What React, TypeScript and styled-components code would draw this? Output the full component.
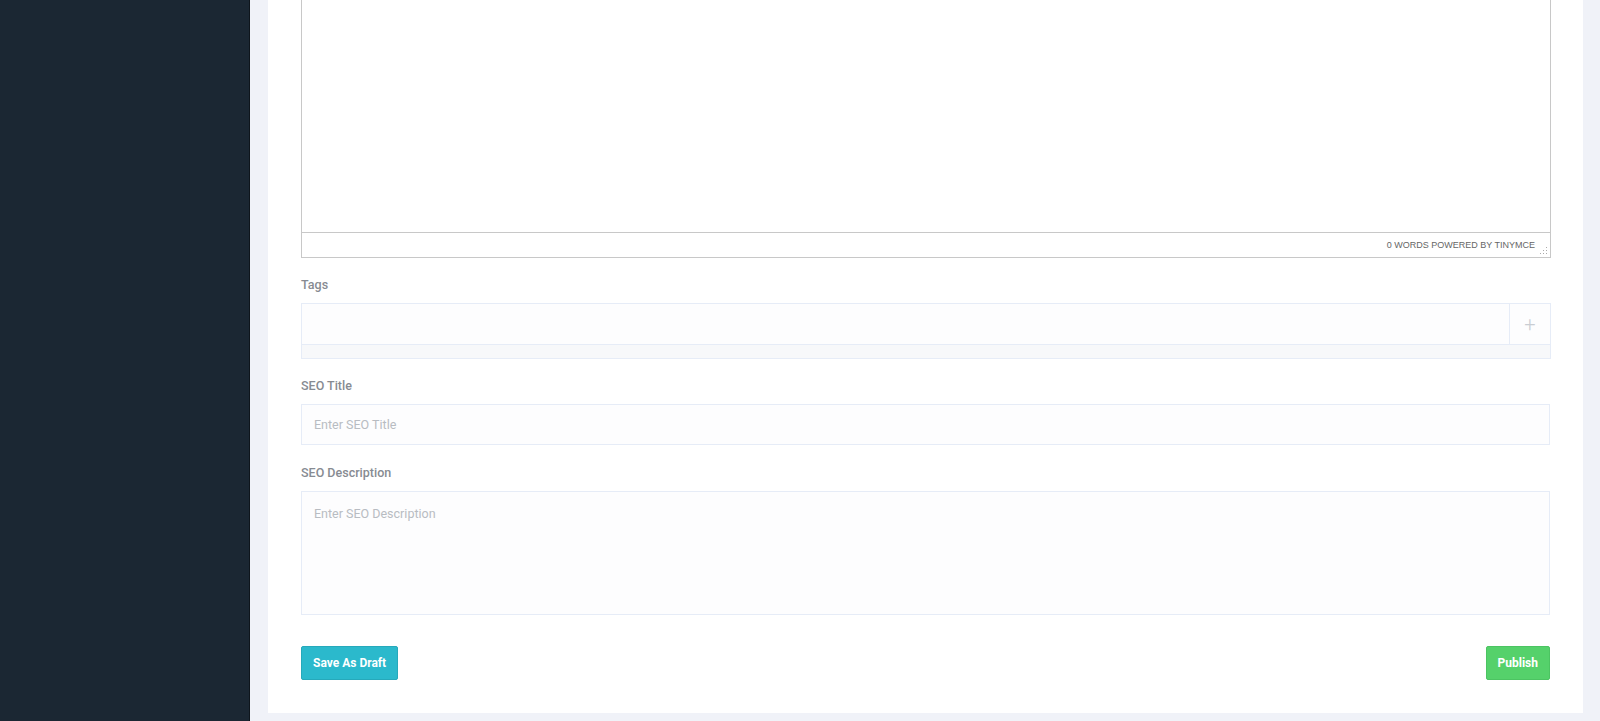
import React from "react"
import styled, { createGlobalStyle } from "styled-components"

const GlobalStyle = createGlobalStyle`
  html, body {
    margin: 0;
    padding: 0;
    height: 721px;
    overflow: hidden;
    font-family: "Roboto", "Noto Sans", sans-serif;
  }
`

const Page = styled.div`
  display: flex;
  height: 721px;
`

const Sidebar = styled.aside`
  width: 249px;
  flex-shrink: 0;
  background: #1b2733;
  border-right: 1px solid #0e151c;
`

const Main = styled.main`
  flex: 1;
  background: #f0f2f8;
  padding: 0 17px 8px 18px;
  display: flex;
  flex-direction: column;
  justify-content: flex-end;
`

const Card = styled.div`
  background: #ffffff;
  padding: 0 32px 33px 33px;
`

const Editor = styled.div`
  border: 1px solid #c8c8c8;
  border-top: none;
  display: flex;
  flex-direction: column;
`

const EditorBody = styled.div`
  height: 240px;
`

const StatusBar = styled.div`
  height: 24px;
  border-top: 1px solid #c8c8c8;
  display: flex;
  align-items: center;
  justify-content: flex-end;
  padding-right: 15px;
  position: relative;
  font-family: "Liberation Sans", Arial, sans-serif;
  font-size: 9px;
  color: #666;
  text-transform: uppercase;
`

const Grip = styled.svg`
  position: absolute;
  right: 2px;
  bottom: 2px;
`

const Group = styled.div<{ $top: number }>`
  margin-top: ${p => p.$top}px;
`

const Label = styled.div`
  font-size: 12.5px;
  font-weight: 500;
  line-height: 16px;
  color: #878b92;
  margin-bottom: 10px;
`

const TagsBox = styled.div`
  width: 1248px;
  border: 1px solid #e6ecf7;
  background: #f7f8fa;
`

const TagsRow = styled.div`
  display: flex;
  height: 40px;
  background: #fdfdfe;
  border-bottom: 1px solid #e6ecf7;
`

const TagsInput = styled.div`
  flex: 1;
`

const AddButton = styled.div`
  width: 40px;
  border-left: 1px solid #e6ecf7;
  display: flex;
  align-items: center;
  justify-content: center;
  color: #c9cdd3;
  font-size: 20px;
  font-weight: 300;
`

const TagsStrip = styled.div`
  height: 13px;
`

const Field = styled.div<{ $height: number; $multi?: boolean }>`
  height: ${p => p.$height}px;
  box-sizing: border-box;
  border: 1px solid #e6ecf7;
  background: #fdfdfe;
  padding: ${p => (p.$multi ? "14px 12px" : "0 12px")};
  display: flex;
  align-items: ${p => (p.$multi ? "flex-start" : "center")};
  font-size: 12.5px;
  color: #b8bcc2;
  width: 1249px;
`

const Actions = styled.div`
  display: flex;
  justify-content: space-between;
  margin-top: 31px;
  width: 1249px;
`

const Button = styled.button<{ $color: string; $border: string }>`
  height: 34px;
  padding: 0 11px;
  border: 1px solid ${p => p.$border};
  border-radius: 2px;
  background: ${p => p.$color};
  color: #fff;
  font-family: "Roboto", "Noto Sans", sans-serif;
  font-size: 12px;
  font-weight: 700;
  cursor: pointer;
`

export default function App() {
  return (
    <>
      <GlobalStyle />
      <Page>
        <Sidebar />
        <Main>
          <Card>
            <Editor>
              <EditorBody />
              <StatusBar>
                0 words powered by tinymce
                <Grip width="8" height="8" viewBox="0 0 8 8">
                  <g fill="#aaa">
                    <rect x="6" y="0" width="1" height="1" />
                    <rect x="6" y="3" width="1" height="1" />
                    <rect x="3" y="3" width="1" height="1" />
                    <rect x="6" y="6" width="1" height="1" />
                    <rect x="3" y="6" width="1" height="1" />
                    <rect x="0" y="6" width="1" height="1" />
                  </g>
                </Grip>
              </StatusBar>
            </Editor>

            <Group $top={19}>
              <Label>Tags</Label>
              <TagsBox>
                <TagsRow>
                  <TagsInput />
                  <AddButton>+</AddButton>
                </TagsRow>
                <TagsStrip />
              </TagsBox>
            </Group>

            <Group $top={19}>
              <Label>SEO Title</Label>
              <Field $height={41}>Enter SEO Title</Field>
            </Group>

            <Group $top={20}>
              <Label>SEO Description</Label>
              <Field $height={124} $multi>Enter SEO Description</Field>
            </Group>

            <Actions>
              <Button $color="#2bb9cc" $border="#26a9bb">Save As Draft</Button>
              <Button $color="#55d16b" $border="#4cc462">Publish</Button>
            </Actions>
          </Card>
        </Main>
      </Page>
    </>
  )
}
